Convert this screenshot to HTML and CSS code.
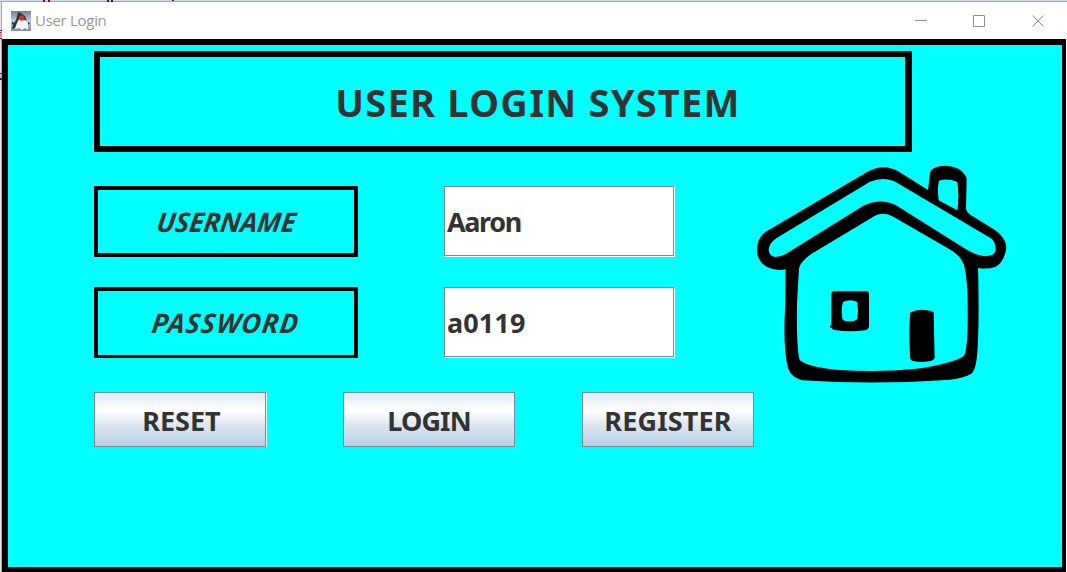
FILE: index.html
```html
<!DOCTYPE html>
<html lang="en">
<head>
<meta charset="utf-8">
<title>User Login</title>
<link rel="stylesheet" href="styles.css">
</head>
<body>
<div class="desktop-top">
  <svg width="1067" height="2" viewBox="0 0 1067 2"><path fill="#7f0055" d="M43 0h2v2h-2zM48 0h2v2h-2z"/><path fill="#222" d="M107 0h2v2h-2zM111 0h2v2h-2zM172 0h2v1h-2z"/></svg>
</div>
<div class="workspace">
  <svg class="desktop-side" width="2" height="570" viewBox="0 0 2 570"><path fill="#7f0055" d="M0 28h2v1H0zM0 30h1v5H0zM0 36h2v1H0zM0 71h2v1H0zM0 76h2v2H0z"/><path fill="#d99a80" d="M0 31h1v4H0z"/><path fill="#a9b9ef" d="M0 73h1v3H0z"/></svg>
  <div class="window">
    <header class="titlebar">
      <svg class="app-icon" width="20" height="20" viewBox="0 0 20 20">
        <defs><linearGradient id="ig" x1="0" y1="0" x2="0" y2="1"><stop offset="0" stop-color="#6e8092"/><stop offset=".5" stop-color="#c3cdd5"/><stop offset="1" stop-color="#7d8c9b"/></linearGradient></defs>
        <path fill="url(#ig)" d="M0 0h20v20H0z"/>
        <path fill="#f4f4f4" d="M6 9l9-1 2 5 0 6-3-2-3 2-3-2-4 1z"/>
        <path fill="#30363d" d="M7 1l3 1 4 3 2 5-2-1-2 0-4-1-2 4-2 5-3 1 1-4 3-5zM1 11l3 1-1 2-2-1zM17 11l2 1-2 2z"/>
        <circle cx="10.700" cy="7" r="2.700" fill="#e02a25"/>
      </svg>
      <span class="caption">User Login</span>
      <svg class="controls" width="130" height="12" viewBox="0 0 130 12" fill="none" stroke="#8e8e8e"><path d="M0 5.500h12M58.500 .5h11v11h-11zM117.500 .5l11 11M128.500 .5l-11 11"/></svg>
    </header>
    <main class="panel">
      <h1 class="banner"><span>USER LOGIN SYSTEM</span></h1>
      <section class="middle">
        <div class="fields">
          <label class="tag" for="user"><span class="t-user">USERNAME</span></label>
          <input class="field f-user" id="user" value="Aaron">
          <label class="tag tag-pass" for="pass"><span class="t-pass">PASSWORD</span></label>
          <input class="field f-pass" id="pass" value="a0119">
        </div>
        <svg class="house" width="265" height="230" viewBox="0 0 795 690">
          <path d="M45 217L350 37Q400 7 447 35L534 90L540 38Q545 18 588 17Q637 20 650 55L648 145Q650 157 662 165L735 210Q768 233 769 263Q763 306 737 320Q715 329 684 324Q688 470 683 560Q680 628 664 641Q640 654 600 659Q380 675 158 661Q126 655 114 625Q98 560 106 430L107 328Q76 334 51 321Q24 305 21 275Q20 235 45 217Z"/>
          <path class="cut" d="M80 234L360 65Q398 50 433 64L725 236Q738 250 737 272Q729 291 700 288Q678 286 648 268L450 143Q400 109 339 138L111 280Q96 290 75 291Q58 288 56 270Q57 250 80 234ZM567 62Q594 54 622 66Q628 110 622 151L566 121Q561 88 567 62ZM147 325Q153 298 205 269L365 173Q396 151 430 170L596 266Q631 285 642 314Q653 360 653 430Q655 565 642 587Q610 610 500 626Q380 639 258 629Q175 621 149 600Q139 565 141 430Z"/>
          <path d="M251 394H350Q357 395 357 404V497Q356 510 344 511Q300 517 253 510Q246 508 246 504L240 503V498L244 496V402Q244 395 251 394ZM480 458Q512 442 551 456Q552 525 554 593Q550 603 536 604Q512 608 489 603Q482 602 480 593Q476 525 480 458Z"/>
          <path class="cut" d="M279 426Q300 415 322 426Q326 452 322 477Q314 486 298 484Q281 484 277 476Q272 450 279 426Z"/>
        </svg>
      </section>
      <div class="buttons">
        <button class="btn btn-reset"><span>RESET</span></button>
        <button class="btn btn-login"><span>LOGIN</span></button>
        <button class="btn btn-register"><span>REGISTER</span></button>
      </div>
    </main>
  </div>
</div>
</body>
</html>
```
FILE: styles.css
```css
* { box-sizing: border-box; }
body {
  margin: 0;
  width: 1067px;
  height: 572px;
  overflow: hidden;
  background: #fff;
  color: #333;
  font-family: "Noto Sans", "Open Sans", sans-serif;
}
svg { display: block; flex: none; }
.desktop-top { height: 2px; background: linear-gradient(#d0dbe6 50%, #9caab8 50%); }
.workspace { display: flex; height: 570px; }
.desktop-side { background: linear-gradient(90deg, #e6e6e6 50%, #a8a8a8 50%); }
.window { width: 1064px; display: flex; flex-direction: column; }
.titlebar { height: 37px; display: flex; align-items: center; padding: 0 21px 0 9px; }
.caption {
  margin-left: 4px;
  padding-bottom: 1px;
  flex: 1;
  color: #999;
  font: 15px/20px "Open Sans", sans-serif;
  letter-spacing: -0.3px;
}
.panel {
  height: 533px;
  border: solid #000;
  border-width: 6px 4px 5px 6px;
  background: #0ff;
  padding: 6px 0 0 86px;
}
.banner, .tag, .btn { display: flex; align-items: center; justify-content: center; }
.banner {
  width: 818px;
  height: 101px;
  margin: 0;
  padding-left: 71px;
  border: 6px solid #000;
  border-right-width: 7px;
  font-size: 38px;
  line-height: 50px;
  font-weight: 700;
  letter-spacing: 1.25px;
  white-space: nowrap;
}
.middle { display: flex; height: 240px; padding-top: 8px; }
.fields {
  width: 656px;
  padding-top: 26px;
  display: grid;
  grid-template: 71px 71px / 264px 231px;
  gap: 30px 86px;
  align-content: start;
}
.tag { border: 4px solid #000; font-size: 27px; font-weight: 700; font-style: italic; }
.tag-pass { border-bottom-width: 3px; }
.tag span { display: block; transform: skewX(-7deg); }
.t-user { letter-spacing: -0.2px; }
.t-pass { letter-spacing: 1px; }
.tag .t-pass { margin-top: -1px; }
.field {
  width: 231px;
  height: 71px;
  border: 1px solid #7a8a99;
  border-right-color: #fff;
  border-bottom-color: #fff;
  box-shadow: inset -1px -1px #7a8a99;
  border-radius: 0;
  background: #fff;
  padding: 0 2px 1px;
  font: 700 27px "Noto Sans", sans-serif;
  color: #333;
  outline: none;
}
.f-user { letter-spacing: -1.4px; }
.f-pass { letter-spacing: 0.1px; }
.cut { fill: #0ff; }
.buttons { display: flex; }
.btn {
  width: 172px;
  height: 55px;
  padding: 1px 0 0;
  border: 1px solid #7a8a99;
  background: linear-gradient(#dde8f3, #fff 30%, #fff 34%, #dfe8f1 58%, #b8cfe5);
  color: #333;
  font: 700 27px "Noto Sans", sans-serif;
}
.btn-reset { box-shadow: 1px 0 #e8f4fa; padding-left: 3px; }
.btn-login { margin-left: 77px; letter-spacing: -0.9px; }
.btn-register { margin-left: 67px; letter-spacing: 0.15px; }
```
